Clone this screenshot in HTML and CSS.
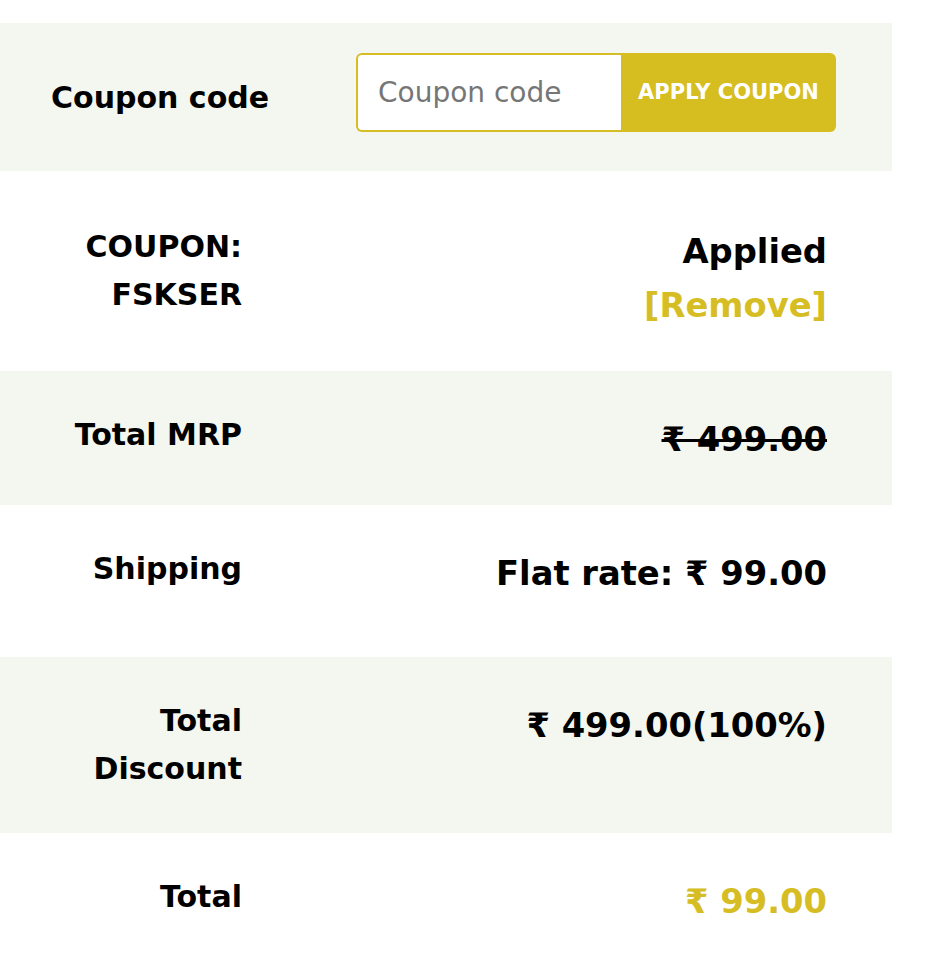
FILE: index.html
```html
<!DOCTYPE html>
<html lang="en">
<head>
<meta charset="utf-8">
<title>Cart totals</title>
<link rel="stylesheet" href="styles.css">
</head>
<body>
<div class="totals">
  <div class="coupon-row">
    <span class="coupon-label">Coupon code</span>
    <form class="coupon-form">
      <input class="coupon-input" type="text" placeholder="Coupon code">
      <button class="coupon-btn" type="button">APPLY COUPON</button>
    </form>
  </div>
  <table class="totals-table">
    <tr class="row row-first">
      <th class="label">COUPON: FSKSER</th>
      <td class="value">Applied<br><a class="remove" href="#">[Remove]</a></td>
    </tr>
    <tr class="row row-alt">
      <th class="label">Total MRP</th>
      <td class="value"><del>₹ 499.00</del></td>
    </tr>
    <tr class="row row-ship">
      <th class="label">Shipping</th>
      <td class="value">Flat rate: ₹ 99.00</td>
    </tr>
    <tr class="row row-alt">
      <th class="label">Total Discount</th>
      <td class="value">₹ 499.00(100%)</td>
    </tr>
    <tr class="row">
      <th class="label">Total</th>
      <td class="value total">₹ 99.00</td>
    </tr>
  </table>
</div>
</body>
</html>
```

FILE: styles.css
```css
html, body {
  margin: 0;
  padding: 0;
  background: #ffffff;
}
body {
  font-family: "DejaVu Sans", Verdana, sans-serif;
  color: #000;
  padding-top: 23px;
}
.totals {
  width: 892px;
}
.coupon-row {
  background: #f4f6f0;
  height: 148px;
  display: flex;
  align-items: center;
  padding-left: 51px;
  box-sizing: border-box;
}
.coupon-label {
  font-weight: bold;
  font-size: 30px;
  width: 305px;
}
.coupon-form {
  display: flex;
  margin: 0;
  height: 79px;
  position: relative;
  top: -5px;
}
.coupon-input {
  width: 265px;
  box-sizing: border-box;
  height: 79px;
  border: 2px solid #d6bd24;
  border-right: none;
  border-radius: 6px 0 0 6px;
  padding: 0 0 0 20px;
  font-family: "DejaVu Sans", Verdana, sans-serif;
  font-size: 28px;
  color: #333;
  background: #fff;
  outline: none;
}
.coupon-input::placeholder {
  color: #767676;
}
.coupon-btn {
  width: 215px;
  height: 79px;
  border: none;
  border-radius: 0 6px 6px 0;
  background: #d6bd20;
  color: #fff;
  font-family: "DejaVu Sans", Verdana, sans-serif;
  font-weight: bold;
  font-size: 21px;
  padding: 0;
  cursor: pointer;
}
.totals-table {
  width: 892px;
  border-collapse: collapse;
  border-spacing: 0;
}
.row th {
  padding: 40px 0;
  vertical-align: top;
}
.row td {
  padding: 42px 0 38px;
  vertical-align: top;
}
.row-alt {
  background: #f4f6f0;
}
.label {
  width: 242px;
  text-align: right;
  font-size: 30px;
  line-height: 48px;
  font-weight: bold;
  padding-left: 60px !important;
  box-sizing: border-box;
}
.value {
  text-align: right;
  font-size: 33.75px;
  line-height: 54px;
  font-weight: bold;
  padding-right: 65px !important;
}
.row-first th {
  padding-top: 52px;
}
.row-first td {
  padding-top: 54px;
}
.row-ship td {
  padding-bottom: 56px;
}
.remove {
  color: #d6bd24;
  text-decoration: none;
}
.total {
  color: #d6bd24;
}
del {
  text-decoration-thickness: 3px;
}
```
